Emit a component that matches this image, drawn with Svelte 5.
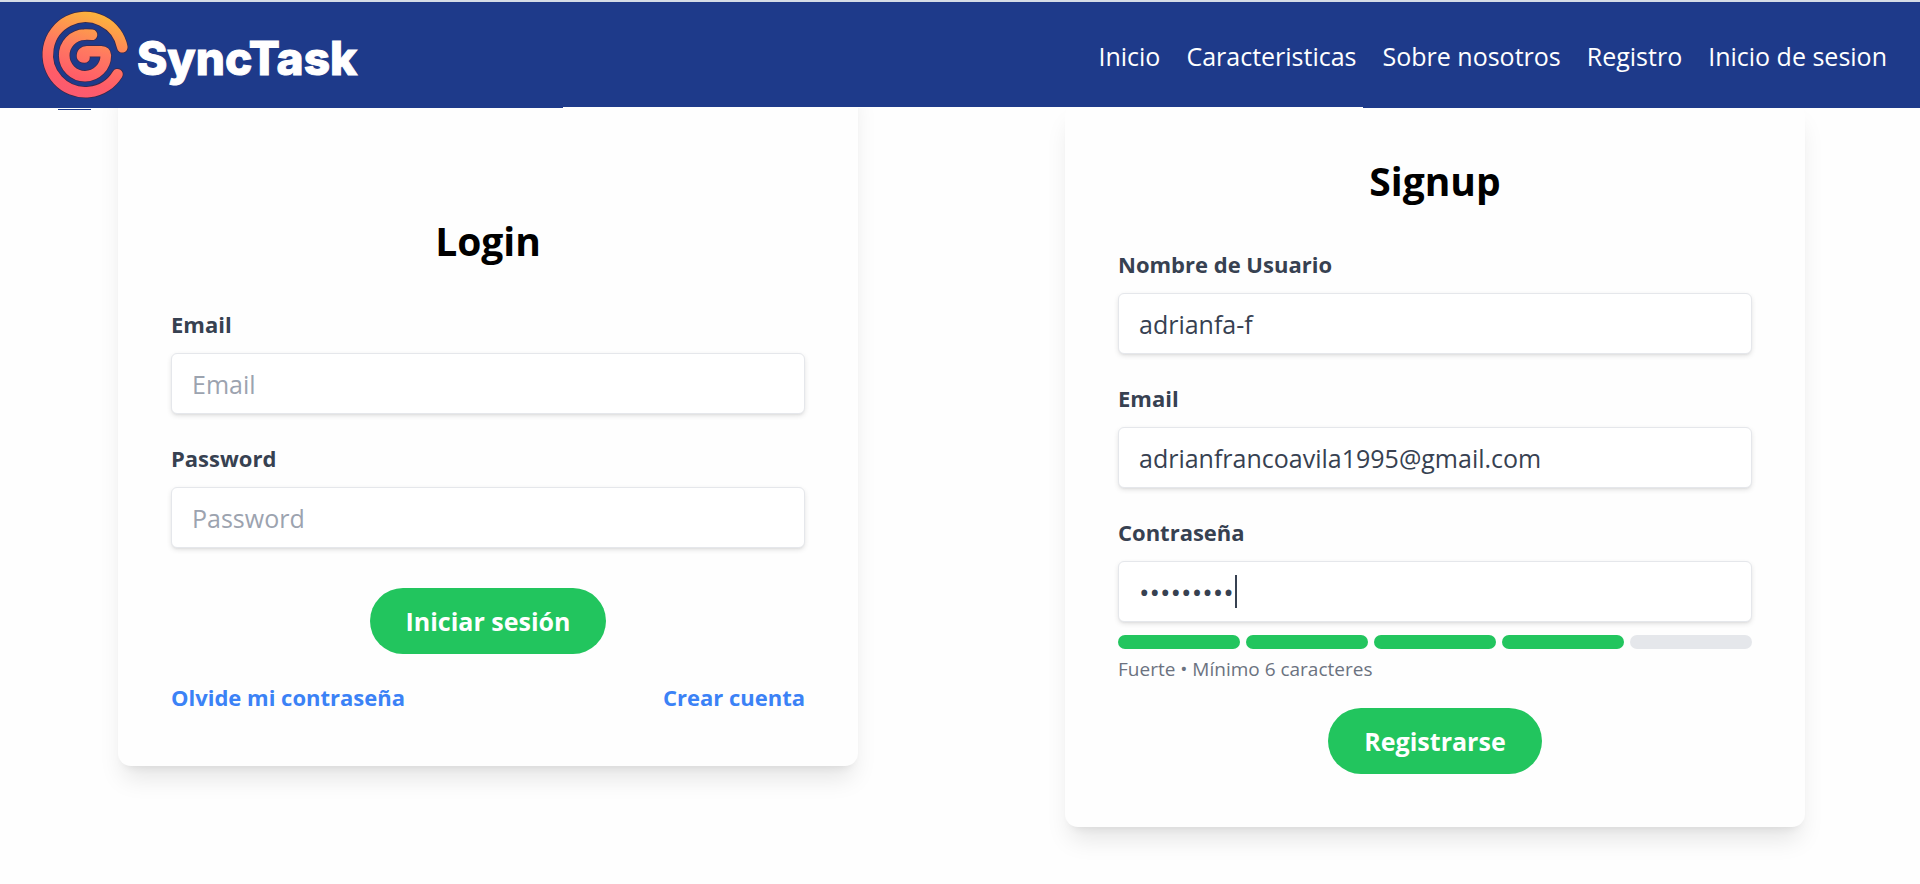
<script>
  const links = ['Inicio', 'Caracteristicas', 'Sobre nosotros', 'Registro', 'Inicio de sesion'];

  let loginEmail = $state('');
  let loginPassword = $state('');
  let username = $state('adrianfa-f');
  let email = $state('adrianfrancoavila1995@gmail.com');
  let password = $state('clave1995');
  const strength = 4;
</script>

<header>
  <a class="brand" href="#inicio">
    <svg width="88" height="90" viewBox="41 11 88 90" fill="none" stroke-linecap="round" stroke-linejoin="round" aria-hidden="true">
      <defs>
        <linearGradient id="flame" gradientUnits="userSpaceOnUse" x1="105" y1="14" x2="80" y2="98">
          <stop offset="0" stop-color="#fbb63a" />
          <stop offset="0.45" stop-color="#ff7a60" />
          <stop offset="0.8" stop-color="#ff5c68" />
          <stop offset="1" stop-color="#fb5a70" />
        </linearGradient>
        <path id="outer" d="M122.3 47.3A37.6 37.6 0 1 0 117.5 74.2" />
        <path id="inner" d="M92 34.8Q88 34.4 84.5 34.6A20.8 20.8 0 1 0 105.8 55.5Q105.5 51.5 101 51.3H87Q82 51.5 82 56Q82 57.5 84.5 57.5" />
      </defs>
      <g stroke="#3a2848" stroke-width="12">
        <use href="#outer" />
        <use href="#inner" />
      </g>
      <g stroke="url(#flame)" stroke-width="10.6">
        <use href="#outer" />
        <use href="#inner" />
      </g>
    </svg>
    <span>SyncTask</span>
  </a>
  <nav>
    {#each links as link}
      <a href="#{link.toLowerCase().replaceAll(' ', '-')}">{link}</a>
    {/each}
  </nav>
</header>

<main>
  <form class="card login">
    <h2>Login</h2>
    <div class="field">
      <label for="login-email">Email</label>
      <input id="login-email" type="email" placeholder="Email" bind:value={loginEmail} />
    </div>
    <div class="field">
      <label for="login-password">Password</label>
      <input id="login-password" type="password" placeholder="Password" bind:value={loginPassword} />
    </div>
    <button type="button">Iniciar sesión</button>
    <div class="options">
      <a href="#recuperar">Olvide mi contraseña</a>
      <a href="#registro">Crear cuenta</a>
    </div>
  </form>

  <form class="card signup">
    <h2>Signup</h2>
    <div class="field">
      <label for="username">Nombre de Usuario</label>
      <input id="username" type="text" bind:value={username} />
    </div>
    <div class="field">
      <label for="email">Email</label>
      <input id="email" type="email" bind:value={email} />
    </div>
    <div class="field">
      <label for="password">Contraseña</label>
      <div class="caret-box">
        <input id="password" type="password" bind:value={password} />
        <span class="caret" aria-hidden="true"></span>
      </div>
    </div>
    <div class="meter">
      {#each Array(5) as _, i}
        <span class:on={i < strength}></span>
      {/each}
    </div>
    <p>Fuerte • Mínimo 6 caracteres</p>
    <button type="button">Registrarse</button>
  </form>
</main>

<style>
  :global(body) {
    background: #fefefe;
    font-family: 'Open Sans', 'Noto Sans', sans-serif;
  }

  header {
    position: relative;
    z-index: 1;
    display: flex;
    align-items: center;
    justify-content: space-between;
    box-sizing: border-box;
    min-height: 108px;
    padding: 2px 33px 0 41px;
    border-top: 2px solid #d5dce6;
    background: #1e3a8a;
  }

  header::before,
  header::after {
    content: '';
    position: absolute;
    height: 1px;
  }

  header::before {
    left: 58px;
    bottom: -2px;
    width: 33px;
    background: #1e3a8a;
  }

  header::after {
    left: 563px;
    right: 557px;
    bottom: 0;
    background: #fefefe;
  }

  .brand {
    display: flex;
    align-items: center;
    gap: 8px;
    color: #fff;
    font-family: Inter, sans-serif;
    font-size: 46px;
    font-weight: 800;
    line-height: 60px;
    text-decoration: none;
    -webkit-text-stroke: 1px #fff;
  }

  .brand span {
    padding-top: 4px;
  }

  nav {
    display: flex;
    gap: 26px;
  }

  nav a {
    color: #fff;
    font-size: 25px;
    line-height: 40px;
    text-decoration: none;
  }

  main {
    display: grid;
    grid-template-columns: 1fr 1fr;
    align-items: start;
    column-gap: 207px;
    padding: 0 115px 57px 118px;
  }

  .card {
    display: flex;
    flex-direction: column;
    min-width: 0;
    padding: 51px 53px 53px;
    border-radius: 13px;
    background: #fefefe;
    box-shadow: 0 17px 25px -5px rgba(0, 0, 0, 0.1), 0 7px 10px -7px rgba(0, 0, 0, 0.1);
  }

  .login {
    margin-top: -32px;
    padding-top: 138px;
    padding-bottom: 52px;
  }

  .signup {
    margin-top: -5px;
  }

  h2 {
    margin: 0 0 40px;
    color: #000;
    font-size: 39px;
    font-weight: 700;
    line-height: 54px;
    text-align: center;
  }

  .field + .field {
    margin-top: 28px;
  }

  label {
    display: block;
    margin-bottom: 12px;
    color: #374151;
    font-size: 22px;
    font-weight: 700;
    line-height: 33px;
  }

  input {
    display: block;
    box-sizing: border-box;
    width: 100%;
    height: 61px;
    padding: 0 20px;
    border: 1px solid #e5e7eb;
    border-radius: 6px;
    outline: none;
    background: #fff;
    box-shadow: 0 2px 5px rgba(0, 0, 0, 0.1), 0 2px 3px -2px rgba(0, 0, 0, 0.1);
    color: #374151;
    font: 25px/34px 'Open Sans', 'Noto Sans', sans-serif;
  }

  input::placeholder {
    color: #9ca3af;
    opacity: 1;
  }

  .caret-box {
    position: relative;
  }

  .caret-box input {
    font-size: 28px;
  }

  .caret {
    position: absolute;
    top: 14px;
    left: 117px;
    width: 2px;
    height: 33px;
    background: #374151;
  }

  button {
    align-self: center;
    height: 66px;
    margin-top: 40px;
    padding: 0 36px;
    border: 0;
    border-radius: 33px;
    background: #22c55e;
    color: #fff;
    font: 700 25px/40px 'Open Sans', 'Noto Sans', sans-serif;
  }

  .options {
    display: flex;
    justify-content: space-between;
    margin-top: 27px;
  }

  .options a {
    color: #3b82f6;
    font-size: 22px;
    font-weight: 700;
    line-height: 33px;
    text-decoration: none;
  }

  .meter {
    display: grid;
    grid-template-columns: repeat(5, 1fr);
    gap: 6px;
    margin-top: 13px;
  }

  .meter span {
    height: 14px;
    border-radius: 7px;
    background: #e5e7eb;
  }

  .meter .on {
    background: #22c55e;
  }

  p {
    margin: 7px 0 0;
    color: #6b7280;
    font-size: 19px;
    line-height: 27px;
  }

  .signup button {
    margin-top: 25px;
  }
</style>
